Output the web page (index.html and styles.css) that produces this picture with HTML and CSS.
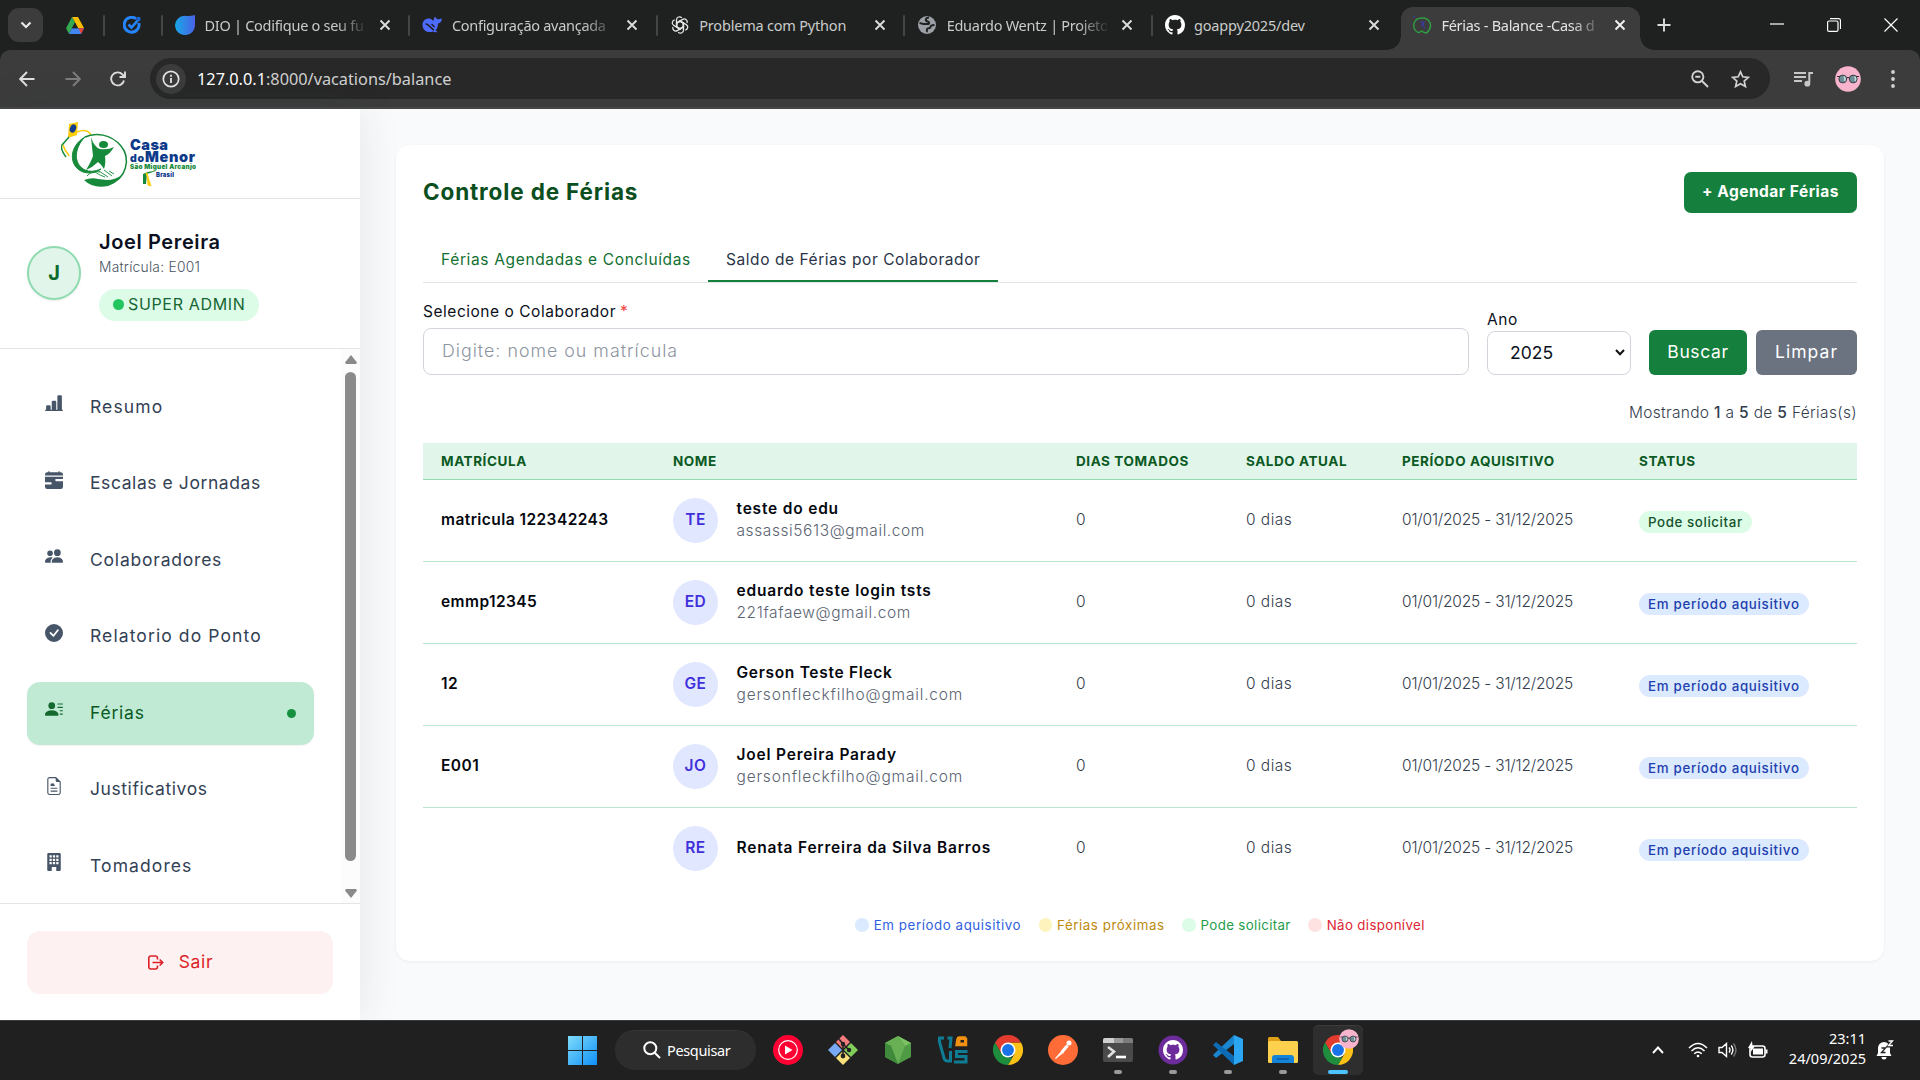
FILE: index.html
```html
<!DOCTYPE html>
<html lang="pt-BR">
<head>
<meta charset="utf-8">
<title>Férias - Balance - Casa do Menor</title>
<link rel="stylesheet" href="styles.css">
</head>
<body>
<svg class="defs" width="0" height="0">
  <defs>
    <symbol id="i-x" viewBox="0 0 12 12"><path d="M1.5 1.5l9 9M10.500 1.500l-9 9" fill="none" stroke="currentColor" stroke-width="1.9"/></symbol>
    <symbol id="i-github" viewBox="0 0 16 16"><path fill="currentColor" d="M8 0C3.580 0 0 3.580 0 8c0 3.540 2.290 6.530 5.470 7.590.4.070.55-.17.55-.38 0-.19-.01-.82-.01-1.490-2.010.37-2.530-.49-2.690-.94-.09-.23-.48-.94-.82-1.130-.28-.15-.68-.52-.01-.53.63-.01 1.080.58 1.230.82.72 1.210 1.870.87 2.330.66.07-.52.28-.87.51-1.070-1.780-.2-3.640-.89-3.640-3.950 0-.87.31-1.590.82-2.150-.08-.2-.36-1.020.08-2.120 0 0 .67-.21 2.200.82.64-.18 1.320-.27 2-.27s1.360.09 2 .27c1.530-1.040 2.200-.82 2.200-.82.44 1.100.16 1.920.08 2.120.51.56.82 1.270.82 2.150 0 3.070-1.870 3.750-3.650 3.950.29.25.54.73.54 1.480 0 1.070-.01 1.930-.01 2.200 0 .21.15.46.55.38A8.010 8.010 0 0 0 16 8c0-4.420-3.580-8-8-8"/></symbol>
    <symbol id="i-chrome" viewBox="0 0 48 48">
      <path d="M24 12H44.800A24 24 0 0 1 24 48L34.400 30z" fill="#fbc116"/>
      <path d="M13.600 30L3.200 12A24 24 0 0 1 44.800 12H24z" fill="#e33b2e"/>
      <path d="M3.200 12L13.600 30 24 36h7L24 48A24 24 0 0 1 3.200 12z" fill="#1e8e3e"/>
      <circle cx="24" cy="24" r="12" fill="#fff"/><circle cx="24" cy="24" r="9.500" fill="#1a73e8"/>
    </symbol>
    <symbol id="i-avatar" viewBox="0 0 26 26">
      <circle cx="13" cy="13" r="12.800" fill="#f8b4cc"/>
      <circle cx="7.800" cy="13" r="3.900" fill="#6f8d94" stroke="#3b3f46" stroke-width="1"/><circle cx="18.200" cy="13" r="3.900" fill="#6f8d94" stroke="#3b3f46" stroke-width="1"/>
      <path d="M2 10.500h3M21 10.500h3M11.600 12q1.400-1 2.800 0" stroke="#2b2f36" stroke-width="1"/><path d="M9 10.500q2 2 .5 4.500M19.500 10.500q2 2 .5 4.500" stroke="#c4dbe0" stroke-width="1.500" fill="none"/>
    </symbol>
  </defs>
</svg>

<header class="browser">
  <div class="tabstrip">
    <div class="tab-search"><svg width="12" height="8" viewBox="0 0 12 8"><path d="M1.500 1.500L6 6l4.500-4.500" fill="none" stroke="#e8e8e8" stroke-width="2.200"/></svg></div>
    <div class="pinned"><svg width="18" height="17" viewBox="0 0 18 17"><path d="M6 0h6l6 11h-6z" fill="#fbbc04"/><path d="M6 0l3 5.500L3 17 0 11.300z" fill="#34a853"/><path d="M3 17l3-5.700h12L15 17z" fill="#4285f4"/><path d="M12.500 11.300H18L15 17z" fill="#ea4335"/><path d="M9 5.500l3 5.800H6z" fill="#202120"/></svg></div>
    <i class="sep"></i>
    <div class="pinned pinned-b"><svg width="18" height="18" viewBox="0 0 18 18"><path d="M13 2.800A7.400 7.400 0 1 0 15.800 7" fill="none" stroke="#2684fc" stroke-width="3"/><path d="M5.500 8.500l3 3 7-8" fill="none" stroke="#2684fc" stroke-width="2.600"/><circle cx="15.500" cy="3" r="2.200" fill="#1a66d0"/></svg></div>
    <i class="sep"></i>
    <div class="tab">
      <svg width="20" height="20" viewBox="0 0 20 20"><defs><linearGradient id="dio" x1="0" x2="1"><stop offset="0" stop-color="#17a8e8"/><stop offset="1" stop-color="#4b62e6"/></linearGradient></defs><path d="M20 0v10a10 9.700 0 1 1-11-9.300Q15 1.500 20 0z" fill="url(#dio)"/></svg>
      <span class="tab-title fade">DIO | Codifique o seu fu</span><svg class="x"><use href="#i-x"/></svg>
    </div><i class="sep"></i>
    <div class="tab">
      <svg width="20" height="18" viewBox="0 0 20 18"><path d="M.5 9C.5 4 5 1.500 9 3l2.500 2c.5-1.500.5-3.500 1.500-4.500.8 2 2.500 3 4 2.800L20 2.500c-.5 3.500-2 4.500-4 5 0 3.500-1 5.500-2.500 6.800l2 1.700c-2 .5-3.500.2-4.500-.5C5 17.500.5 14 .5 9z" fill="#4d6bfe"/><path d="M3.500 8c3-1 5 4.500 8.500 6M9.500 8l3 3" stroke="#202120" stroke-width="1.500" fill="none"/></svg>
      <span class="tab-title fade">Configuração avançada</span><svg class="x"><use href="#i-x"/></svg>
    </div><i class="sep"></i>
    <div class="tab">
      <svg width="18" height="18" viewBox="0 0 18 18" fill="none" stroke="#e6e6e6" stroke-width="1.300"><g id="petal"><path d="M9 5.200L5.500 7.200V3.800a3 3 0 0 1 5.300-1.900"/><path d="M9 5.200l3.500 2v4"/></g><use href="#petal" transform="rotate(60 9 9)"/><use href="#petal" transform="rotate(120 9 9)"/><use href="#petal" transform="rotate(180 9 9)"/><use href="#petal" transform="rotate(240 9 9)"/><use href="#petal" transform="rotate(300 9 9)"/></svg>
      <span class="tab-title">Problema com Python</span><svg class="x"><use href="#i-x"/></svg>
    </div><i class="sep"></i>
    <div class="tab">
      <svg width="18" height="18" viewBox="0 0 18 18"><circle cx="9" cy="9" r="9" fill="#9aa0a6"/><path d="M11 1.500c-3.500 0-4 3-2 3.800s3 1.200 1.500 2.700H5.500C3.500 8 3 7 1.500 7M16.500 9c-2 0-4 0-4 2s-3 .5-3.500 2 .5 2-.5 3" stroke="#202120" stroke-width="2" fill="none"/></svg>
      <span class="tab-title fade">Eduardo Wentz | Projeto</span><svg class="x"><use href="#i-x"/></svg>
    </div><i class="sep"></i>
    <div class="tab">
      <svg class="gh" width="20" height="20"><use href="#i-github"/></svg>
      <span class="tab-title">goappy2025/dev</span><svg class="x"><use href="#i-x"/></svg>
    </div>
    <div class="tab active">
      <svg width="20" height="20" viewBox="0 0 20 20" fill="none"><path d="M6 17.500C-1 13 1 3 10 3s11 9 5 14.500M5 17c3 2 4-2 5-1s2 3 6 1" stroke="#2f9e44" stroke-width="1.400"/><path d="M1 1l2 1M8 6l3 2-2 3M12 6l-1 5 2 2" stroke="#3b3b9d" stroke-width="1.200"/></svg>
      <span class="tab-title fade">Férias - Balance -Casa d</span><svg class="x"><use href="#i-x"/></svg>
    </div>
    <svg class="plus" width="14" height="14" viewBox="0 0 14 14"><path d="M7 0.500v13M.5 7h13" stroke="#dcdcdc" stroke-width="1.900"/></svg>
    <div class="winctl">
      <svg width="14" height="14" viewBox="0 0 14 14"><path d="M0 6h14" stroke="#fff" stroke-width="1.200"/></svg>
      <svg width="14" height="14" viewBox="0 0 14 14" fill="none" stroke="#fff" stroke-width="1.200"><rect x=".6" y="3" width="10.400" height="10.400" rx="1.500"/><path d="M3 .700h8.500a2 2 0 0 1 2 2V11"/></svg>
      <svg width="14" height="14" viewBox="0 0 14 14"><path d="M.5.500l13 13M13.500.500l-13 13" stroke="#fff" stroke-width="1.200"/></svg>
    </div>
  </div>
  <div class="toolbar">
    <svg width="16" height="16" viewBox="0 0 16 16"><path d="M15.500 8H1.500M8 1L1.200 8 8 15" fill="none" stroke="#dedede" stroke-width="1.900"/></svg>
    <svg width="16" height="16" viewBox="0 0 16 16"><path d="M.5 8h14M8 1l6.800 7L8 15" fill="none" stroke="#7d7d7d" stroke-width="1.900"/></svg>
    <svg width="16" height="16" viewBox="0 0 16 16"><path d="M14 9.500A6.500 6.500 0 1 1 12.500 3.500L15 6M15 .5V6H9.500" fill="none" stroke="#dedede" stroke-width="1.900"/></svg>
    <div class="address">
      <span class="info"><svg width="18" height="18" viewBox="0 0 18 18"><circle cx="9" cy="9" r="7.700" fill="none" stroke="#e4e4e4" stroke-width="1.700"/><path d="M9 8v5M9 4.800v1.900" stroke="#e4e4e4" stroke-width="1.800"/></svg></span>
      <span class="url"><b>127.0.0.1</b>:8000/vacations/balance</span>
      <svg width="18" height="18" viewBox="0 0 18 18" fill="none" stroke="#d2d2d2" stroke-width="1.900"><circle cx="6.800" cy="6.800" r="5.600"/><path d="M11 11l6 6M4.300 6.800h5"/></svg>
      <svg class="star" width="19" height="18" viewBox="0 0 19 18"><path d="M9.500 1.800l2.300 5 5.500.6-4.100 3.700 1.200 5.400-4.900-2.800-4.900 2.800 1.200-5.400L1.700 7.400l5.500-.6z" fill="none" stroke="#d2d2d2" stroke-width="1.700"/></svg>
    </div>
    <svg class="music" width="20" height="16" viewBox="0 0 20 16"><path d="M0 2h12M0 6h12M0 10h8" stroke="#c7c7c7" stroke-width="1.900"/><path d="M15.300 12.500V2H19" stroke="#c7c7c7" stroke-width="2" fill="none"/><circle cx="13.300" cy="12.700" r="2.900" fill="#c7c7c7"/></svg>
    <svg class="me" width="26" height="26"><use href="#i-avatar"/></svg>
    <svg width="4" height="18" viewBox="0 0 4 18" fill="#d2d2d2"><circle cx="2" cy="2" r="1.900"/><circle cx="2" cy="9" r="1.900"/><circle cx="2" cy="16" r="1.900"/></svg>
  </div>
</header>

<div class="page">
  <aside class="sidebar">
    <div class="brand">
      <svg width="138" height="68" viewBox="0 0 138 68">
        <path d="M8 2l9-2-1 13-9 3z" fill="#fccc0a"/><ellipse cx="12" cy="6.500" rx="3" ry="4.300" fill="#123c8c" transform="rotate(20 12 6.500)"/>
        <path d="M8 15Q2 22 1 23q-2 4 4 12" fill="none" stroke="#168a3a" stroke-width="1.500"/><path d="M2 23q2 6 5 9l1 2M16 10q10-4 14 3" fill="none" stroke="#fccc0a" stroke-width="1.600"/>
        <path d="M24 15C34 10 50 12 60 24s6 34-13 38" fill="none" stroke="#168a3a" stroke-width="1.500"/>
        <path d="M24 15C8 24 7 44 22 50q10 3 18-3-9 4-16 1C12 42 13 26 24 15z" fill="#168a3a" stroke="#168a3a" stroke-width="1"/>
        <ellipse cx="42.500" cy="22.500" rx="4.500" ry="3.500" fill="#168a3a"/>
        <path d="M30 15q3 10 9 12 9 1 14-2-4 7-9 9 1 8-1 13-3-5-6-7-5 5-12 8 5-8 7-14-1-9-2-19z" fill="#168a3a"/>
        <path d="M23 58q8-3 14-1l9 1q8 0 15-5-5 8-14 11-15 3-24-6z" fill="#168a3a"/>
        <path d="M34 50q6 4 10 5M38 49l9 6M43 48l8 6M48 49l5 3M26 54q5-6 13-4" fill="none" stroke="#168a3a" stroke-width=".9"/>
        <text class="lg lg-a" x="69" y="28" textLength="38">Casa</text>
        <text class="lg lg-b" x="69" y="40" textLength="14">do</text><text class="lg lg-c" x="84" y="40" textLength="50">Menor</text>
        <text class="lg lg-d" x="69" y="47" textLength="66">São Miguel Arcanjo</text>
        <text class="lg lg-e" x="95" y="55" textLength="18">Brasil</text>
        <path d="M82 62V52q5-3 13-3l-9 3-1 10z" fill="#168a3a"/><path d="M86 51q2 8 4 13l-3-1q0-8-2-12z" fill="#fccc0a" stroke="#fccc0a"/>
      </svg>
    </div>
    <div class="profile">
      <div class="initial">J</div>
      <div>
        <div class="pname">Joel Pereira</div>
        <div class="pmat">Matrícula: E001</div>
        <div class="role"><i></i><span>SUPER ADMIN</span></div>
      </div>
    </div>
    <div class="navwrap">
      <nav class="nav">
        <a class="item"><svg viewBox="0 0 16 16"><path d="M11 2a1 1 0 0 1 1-1h2a1 1 0 0 1 1 1v12h.5a.5.5 0 0 1 0 1H.5a.5.5 0 0 1 0-1H1v-3a1 1 0 0 1 1-1h2a1 1 0 0 1 1 1v3h1V7a1 1 0 0 1 1-1h2a1 1 0 0 1 1 1v7h1z"/></svg><span class="wide">Resumo</span></a>
        <a class="item"><svg viewBox="0 0 16 16"><path d="M4 .5a.5.5 0 0 0-1 0V1H2a2 2 0 0 0-2 2v1h16V3a2 2 0 0 0-2-2h-1V.5a.5.5 0 0 0-1 0V1H4zM16 7V5H0v5h5a1 1 0 1 1 0 2H0v2a2 2 0 0 0 2 2h12a2 2 0 0 0 2-2V9h-6a1 1 0 1 1 0-2z"/></svg><span class="tight">Escalas e Jornadas</span></a>
        <a class="item"><svg viewBox="0 0 16 16"><path d="M7 14s-1 0-1-1 1-4 5-4 5 3 5 4-1 1-1 1zm4-6a3 3 0 1 0 0-6 3 3 0 0 0 0 6m-5.784 6A2.240 2.240 0 0 1 5 13c0-1.355.68-2.750 1.936-3.720A6.300 6.300 0 0 0 5 9c-4 0-5 3-5 4s1 1 1 1zM4.500 8a2.500 2.500 0 1 0 0-5 2.500 2.500 0 0 0 0 5"/></svg><span>Colaboradores</span></a>
        <a class="item"><svg viewBox="0 0 16 16"><path d="M16 8A8 8 0 1 1 0 8a8 8 0 0 1 16 0m-3.970-3.030a.75.75 0 0 0-1.080.022L7.477 9.417 5.384 7.323a.75.75 0 0 0-1.060 1.060L6.970 11.030a.75.75 0 0 0 1.079-.02l3.992-4.990a.75.75 0 0 0-.01-1.050z"/></svg><span class="wide">Relatorio do Ponto</span></a>
        <a class="item current"><svg viewBox="0 0 16 16"><path d="M6 8a3 3 0 1 0 0-6 3 3 0 0 0 0 6m-5 6s-1 0-1-1 1-4 6-4 6 3 6 4-1 1-1 1zM11 3.500a.5.5 0 0 1 .5-.5h4a.5.5 0 0 1 0 1h-4a.5.5 0 0 1-.5-.5m.5 2.500a.5.5 0 0 0 0 1h4a.5.5 0 0 0 0-1zm2 3a.5.5 0 0 0 0 1h2a.5.5 0 0 0 0-1zm0 3a.5.5 0 0 0 0 1h2a.5.5 0 0 0 0-1z"/></svg><span>Férias</span><i></i></a>
        <a class="item"><svg viewBox="0 0 16 16"><path d="M9.500.5H4a1.500 1.500 0 0 0-1.500 1.500v12A1.500 1.500 0 0 0 4 15.500h8a1.500 1.500 0 0 0 1.500-1.500V4.500z" fill="none" stroke="currentColor"/><path d="M9.500 0v3A1.500 1.500 0 0 0 11 4.500h3zM5 6l2.500-.5L9 8H5zM5 9.500h6v1H5zM5 12h6v1H5z"/></svg><span class="tight">Justificativos</span></a>
        <a class="item"><svg viewBox="0 0 16 16"><path fill-rule="evenodd" d="M3 0a1 1 0 0 0-1 1v14a1 1 0 0 0 1 1h3v-3.500h4V16h3a1 1 0 0 0 1-1V1a1 1 0 0 0-1-1zm1 2h2v2H4zm3 0h2v2H7zm3 0h2v2h-2zM4 5h2v2H4zm3 0h2v2H7zm3 0h2v2h-2zM4 8h2v2H4zm3 0h2v2H7zm3 0h2v2h-2z"/></svg><span class="wide">Tomadores</span></a>
      </nav>
      <div class="scroll"><svg width="12" height="9" viewBox="0 0 12 9"><path d="M6 0l6 7.500L11 9H1L0 7.500z"/></svg><i></i><svg width="12" height="9" viewBox="0 0 12 9"><path d="M6 9L0 1.500 1 0h10l1 1.500z"/></svg></div>
    </div>
    <div class="side-foot">
      <a class="logout"><svg width="16" height="15" viewBox="0 0 16 15" fill="none" stroke="currentColor" stroke-width="1.600"><path d="M9.500 4.500V3A2.200 2.200 0 0 0 7.300 1H3A2.200 2.200 0 0 0 .8 3v9A2.200 2.200 0 0 0 3 14h4.300a2.200 2.200 0 0 0 2.200-2v-1.500M4.500 7.500h10M11.700 4.500l3 3-3 3"/></svg><span>Sair</span></a>
    </div>
  </aside>

  <main class="main">
    <section class="card">
      <div class="head"><h1>Controle de Férias</h1><a class="btn-add">+ Agendar Férias</a></div>
      <div class="tabs"><a>Férias Agendadas e Concluídas</a><a class="selected">Saldo de Férias por Colaborador</a></div>
      <div class="filters">
        <div class="f-name"><label>Selecione o Colaborador <em>*</em></label><div class="input">Digite: nome ou matrícula</div></div>
        <div class="f-year"><label>Ano</label><div class="select"><span>2025</span><svg width="10" height="7" viewBox="0 0 10 7"><path d="M1 1l4 4.300L9 1" fill="none" stroke="#111" stroke-width="2"/></svg></div></div>
        <div class="f-btns"><a class="b1">Buscar</a><a class="b2">Limpar</a></div>
      </div>
      <p class="count">Mostrando <b>1</b> a <b>5</b> de <b>5</b> Férias(s)</p>
      <div class="table">
        <div class="row thead"><span>MATRÍCULA</span><span>NOME</span><span>DIAS TOMADOS</span><span>SALDO ATUAL</span><span>PERÍODO AQUISITIVO</span><span>STATUS</span></div>
        <div class="row"><strong class="code">matricula 122342243</strong><div class="who"><i>TE</i><div><strong>teste do edu</strong><small>assassi5613@gmail.com</small></div></div><span>0</span><span>0 dias</span><span class="dates">01/01/2025 - 31/12/2025</span><span><mark class="ok">Pode solicitar</mark></span></div>
        <div class="row"><strong class="code">emmp12345</strong><div class="who"><i>ED</i><div><strong>eduardo teste login tsts</strong><small>221fafaew@gmail.com</small></div></div><span>0</span><span>0 dias</span><span class="dates">01/01/2025 - 31/12/2025</span><span><mark>Em período aquisitivo</mark></span></div>
        <div class="row"><strong class="code">12</strong><div class="who"><i>GE</i><div><strong class="tight">Gerson Teste Fleck</strong><small class="wide">gersonfleckfilho@gmail.com</small></div></div><span>0</span><span>0 dias</span><span class="dates">01/01/2025 - 31/12/2025</span><span><mark>Em período aquisitivo</mark></span></div>
        <div class="row"><strong class="code">E001</strong><div class="who"><i>JO</i><div><strong>Joel Pereira Parady</strong><small class="wide">gersonfleckfilho@gmail.com</small></div></div><span>0</span><span>0 dias</span><span class="dates">01/01/2025 - 31/12/2025</span><span><mark>Em período aquisitivo</mark></span></div>
        <div class="row"><strong class="code"></strong><div class="who"><i>RE</i><div><strong>Renata Ferreira da Silva Barros</strong></div></div><span>0</span><span>0 dias</span><span class="dates">01/01/2025 - 31/12/2025</span><span><mark>Em período aquisitivo</mark></span></div>
      </div>
      <div class="legend">
        <span class="blue"><i></i>Em período aquisitivo</span><span class="amber"><i></i>Férias próximas</span><span class="green"><i></i>Pode solicitar</span><span class="red"><i></i>Não disponível</span>
      </div>
    </section>
  </main>
</div>

<footer class="taskbar">
  <svg class="win" width="29" height="29" viewBox="0 0 29 29"><defs><linearGradient id="wg" x1="0" y1="0" x2="1" y2="1" gradientUnits="objectBoundingBox"><stop offset="0" stop-color="#7fdcfc"/><stop offset="1" stop-color="#0f8ff5"/></linearGradient></defs><path d="M0 0h14v14H0zM15 0h14v14H15zM0 15h14v14H0zM15 15h14v14H15z" fill="url(#wg)"/></svg>
  <div class="search"><svg width="18" height="18" viewBox="0 0 18 18" fill="none" stroke="#fff" stroke-width="2"><circle cx="7.300" cy="7.300" r="6"/><path d="M11.700 11.700l5.300 5.300"/></svg><span>Pesquisar</span></div>
  <div class="apps">
    <div class="app"><svg viewBox="0 0 30 30"><circle cx="15" cy="15" r="15" fill="#ff0033"/><circle cx="15" cy="15" r="9.300" fill="none" stroke="#fff" stroke-width="1.200"/><path d="M12 10.500v9l7.500-4.500z" fill="#fff"/></svg></div>
    <div class="app"><svg viewBox="0 0 30 30"><path d="M15 0l7 7-7 7-7-7z" fill="#f57c7c"/><path d="M23 8l7 7-7 7-7-7z" fill="#83cd5b"/><path d="M7 8l7 7-7 7-7-7z" fill="#7aaaf5"/><path d="M15 16l7 7-7 7-7-7z" fill="#f8e07a"/><path d="M11 4l4 5v14M15 9l6 6" stroke="#222" stroke-width="1.600" fill="none"/><circle cx="15" cy="9" r="2.200" fill="#222"/><circle cx="15" cy="21" r="2.400" fill="#222"/><circle cx="21" cy="15" r="2.200" fill="#222"/></svg></div>
    <div class="app"><svg viewBox="0 0 30 30"><path d="M15 1l13 7v14l-13 7-13-7V8z" fill="#4f9a44"/><path d="M15 1l13 7-6 3z" fill="#7cc264"/><path d="M15 1L2 8l6 3zM8 11L15 1l7 10-7 18z" fill="#69b054"/><path d="M2 8l6 3 7 18-13-7z" fill="#3f8a3b"/></svg></div>
    <div class="app"><svg viewBox="0 0 30 30" fill="none" stroke-width="3"><path d="M6 3H1.500v4L6 23q.8 3 3.500 3h3V16M9.500 3H13l-1 10" stroke="#0e7c94"/><path d="M29.500 16.500h-11v5H28V27H16" stroke="#0e7c94"/><path d="M18 10.500l1-6.500q.3-2 2-2h6l1.500 1.500v7z" fill="#f29111" stroke="#f29111" stroke-width="1.500"/><path d="M22.500 5h3.500v2.500h-3.500z" fill="#222"/></svg></div>
    <div class="app"><svg><use href="#i-chrome"/></svg></div>
    <div class="app"><svg viewBox="0 0 30 30"><circle cx="15" cy="15" r="15" fill="#ff6c37"/><path d="M7.500 23.500l6-8 2.500 2.500z" fill="#ffd9c9"/><path d="M14 17l5.500-6.500" stroke="#fff" stroke-width="3.200"/><circle cx="21" cy="8" r="2.500" fill="#fff"/><path d="M7.500 23.500L15 16" stroke="#fff" stroke-width="1.300"/></svg></div>
    <div class="app run"><svg viewBox="0 0 30 30"><rect x="0" y="3" width="30" height="24" rx="2" fill="#4a4a4a"/><path d="M2 3h9v5H0V5a2 2 0 0 1 2-2z" fill="#d0d0d0"/><path d="M11 3h9v5h-9z" fill="#9a9a9a"/><path d="M20 3h8a2 2 0 0 1 2 2v3H20z" fill="#7c7c7c"/><path d="M5 12l6 4.500L5 22" fill="none" stroke="#e0e0e0" stroke-width="2.600"/><path d="M13 22h10" stroke="#fff" stroke-width="2.600"/></svg></div>
    <div class="app run"><svg viewBox="0 0 30 30"><circle cx="15" cy="15" r="14.500" fill="#6d2c9c"/><svg class="octo" x="5" y="5" width="20" height="20"><use href="#i-github"/></svg></svg></div>
    <div class="app run"><svg viewBox="0 0 30 30"><path d="M21 0l9 4v22l-9 4z" fill="#2aa6f2"/><path d="M21 0L2 18l-2 2 3 3 18-14z" fill="#1b86cf"/><path d="M21 30L0 10l3-3 18 14z" fill="#0b6cb5"/></svg></div>
    <div class="app run"><svg viewBox="0 0 30 30"><path d="M1 2h9l3 4h16v8H0V3z" fill="#dfa015"/><rect x="0" y="6" width="30" height="22" rx="1.500" fill="#fdd04e"/><path d="M4 28v-5q0-3 3-3h16q3 0 3 3v5z" fill="#1484d8"/><path d="M9 24h12" stroke="#0b5da8" stroke-width="1.500"/></svg></div>
    <div class="app on"><svg viewBox="0 0 48 48"><use href="#i-chrome"/></svg><svg class="badge"><use href="#i-avatar"/></svg></div>
  </div>
  <div class="tray">
    <svg class="caret" width="12" height="8" viewBox="0 0 12 8"><path d="M1 7l5-5.500L11 7" fill="none" stroke="#fff" stroke-width="1.900"/></svg>
    <svg width="20" height="16" viewBox="0 0 20 16" fill="none" stroke="#fff" stroke-width="1.500"><path d="M1 6q9-9 18 0M3.500 9q6.500-6.500 13 0M6.200 11.800q3.800-3.600 7.600 0"/><circle cx="10" cy="14" r="1.300" fill="#fff" stroke="none"/></svg>
    <svg width="20" height="16" viewBox="0 0 20 16" fill="none" stroke="#fff" stroke-width="1.400"><path d="M1 5.500h3L8.500 1.500v13L4 10.500H1zM11 5.500q2 2.500 0 5"/><path d="M13.200 3.500q3.500 4.500 0 9"/><path d="M15.500 1.500q5 6.500 0 13" stroke="#777"/></svg>
    <svg width="20" height="18" viewBox="0 0 20 18"><rect x="2" y="5" width="15" height="11" rx="2.500" fill="none" stroke="#fff" stroke-width="1.600"/><rect x="5" y="7.500" width="10" height="6" fill="#fff"/><path d="M18.500 8.500v4" stroke="#fff" stroke-width="2"/><path d="M4 0L0 7h3l-1 5 5-7H4.500z" fill="#fff"/></svg>
    <div class="clock"><span>23:11</span><span>24/09/2025</span></div>
    <svg class="bell" width="18" height="20" viewBox="0 0 18 20"><path d="M8 2a6 6 0 0 0-6 6v5L.500 16h15L14 13V8a6 6 0 0 0-6-6zM5.500 17h5a2.500 2.500 0 0 1-5 0z" fill="#fff"/><path d="M12.500 1H17l-4.500 5H17" fill="none" stroke="#222" stroke-width="3"/><path d="M12.500 1H16.500l-4 4.500h4.500" fill="none" stroke="#fff" stroke-width="1.300"/><path d="M5.500 8h4l-4 4.500h4" fill="none" stroke="#222" stroke-width="1.300"/></svg>
  </div>
</footer>
</body>
</html>
```
FILE: styles.css
```css
* { box-sizing: border-box; }
html, body { margin: 0; height: 100%; }
body { width: 1920px; height: 1080px; overflow: hidden; display: flex; flex-direction: column; font-family: "Inter", "Open Sans", sans-serif; background: #f9fafb; color: #0b1020; }
svg { flex: none; display: block; }
.defs { position: absolute; }
i, em { font-style: normal; }

/* browser window */
.browser { height: 109px; flex: none; background: #1f2120; font-family: "Noto Sans", sans-serif; }
.tabstrip { height: 50px; display: flex; align-items: center; padding-left: 8px; }
.tab-search { width: 35px; height: 34px; border-radius: 11px; background: #3c3c3c; display: grid; place-items: center; }
.pinned { width: 60px; padding-left: 23px; }
.pinned-b { width: 56px; padding-left: 18px; }
.sep { flex: none; width: 2px; height: 21px; border-radius: 1px; background: #444645; }
.tab { width: 245.400px; height: 43px; display: flex; align-items: center; padding-left: 12px; color: #c9cbca; }
.tab > svg:first-child { width: 20px; }
.tab-title { flex: 1; margin-left: 9.500px; font-size: 14.500px; white-space: nowrap; overflow: hidden; line-height: 24px; letter-spacing: -.2px; }
.fade { letter-spacing: -.28px; -webkit-mask: linear-gradient(90deg, #000 82%, transparent 102%); mask: linear-gradient(90deg, #000 82%, transparent 102%); }
.x { width: 12px; height: 12px; margin: 0 17.500px 0 14px; color: #dcdcdc; }
.gh { color: #fff; }
.tab.active { position: relative; margin-left: 3px; width: 239px; align-self: flex-end; background: #3c3c3c; border-radius: 12px 12px 0 0; color: #e3e3e3; padding: 0 0 7px 11px; }
.tab.active::before, .tab.active::after { content: ""; position: absolute; bottom: 0; width: 14px; height: 14px; }
.tab.active::before { left: -14px; background: radial-gradient(circle at 0 0, transparent 13.500px, #3c3c3c 14px); }
.tab.active::after { right: -14px; background: radial-gradient(circle at 100% 0, transparent 13.500px, #3c3c3c 14px); }
.tab.active .x { margin-right: 14px; color: #f2f2f2; }
.plus { margin-left: 17px; }
.winctl { margin-left: auto; display: flex; gap: 43px; padding-right: 22px; }
.toolbar { height: 59px; background: #3c3c3c; border-radius: 10px 10px 0 0; border-bottom: 2px solid #474747; display: flex; align-items: center; padding-left: 19px; }
.toolbar > svg + svg { margin-left: 29.500px; }
.address { width: 1620px; height: 41px; margin-left: 24px; border-radius: 21px; background: #282828; display: flex; align-items: center; padding: 0 20px 0 6px; }
.info { width: 30px; height: 30px; border-radius: 50%; background: #3c3c3c; display: grid; place-items: center; margin-right: 11px; }
.url { flex: 1; font-size: 16.300px; line-height: 24px; color: #d0d0d0; }
.url b { font-weight: 400; color: #fff; }
.star { margin-left: 22px; }
.music { margin-left: 23.500px; }
.toolbar > svg.me { margin-left: 21px; }
.toolbar > svg.me + svg { margin-left: 30px; }

/* sidebar */
.page { flex: 1; display: flex; min-height: 0; }
.sidebar { width: 360px; flex: none; background: #fff; display: flex; flex-direction: column; box-shadow: 0 0 40px rgba(30, 50, 70, .1); }
.brand { height: 90px; border-bottom: 1px solid #e2e5e8; padding: 13px 0 0 61px; }
.lg { font-family: "Inter", sans-serif; font-weight: 900; fill: #0d3a8a; }
.lg-a { font-size: 14.500px; }
.lg-b { font-size: 10.500px; }
.lg-c { font-size: 14.500px; }
.lg-d { font-size: 6.300px; fill: #168a3a; }
.lg-e { font-size: 5.800px; }
.profile { height: 150px; border-bottom: 1px solid #e2e5e8; display: flex; align-items: flex-start; padding: 47px 0 0 27px; gap: 18px; }
.profile > div:last-child { margin-top: -16px; }
.initial { width: 54px; height: 54px; border-radius: 50%; border: 2px solid #8fdbb0; background: #e2f5ea; color: #0b6b2a; display: grid; place-items: center; font-weight: 700; font-size: 20px; box-shadow: 0 1px 2px rgba(0,0,0,.08); }
.pname { font-size: 20px; font-weight: 600; line-height: 25px; letter-spacing: .031em; }
.pmat { font-size: 13.800px; font-weight: 300; color: #4b5563; line-height: 20px; margin-top: 2px; letter-spacing: .017em; }
.role { width: 160px; height: 32px; margin-top: 12px; border-radius: 16px; background: #dcfce7; color: #166534; display: flex; align-items: center; gap: 4px; padding: 0 0 2px 14px; font-size: 16px; letter-spacing: .041em; }
.role i { width: 11px; height: 11px; margin-top: 1px; border-radius: 50%; background: #22c55e; }
.navwrap { flex: 1; min-height: 0; display: flex; overflow: hidden; }
.nav { width: 341px; padding: 27px 27px 0; display: flex; flex-direction: column; gap: 13.500px; }
.item { flex: none; height: 63px; border-radius: 13px; display: flex; align-items: center; padding: 0 18px 3px; color: #334155; font-size: 17.500px; letter-spacing: .045em; }
.item svg { width: 18px; height: 18px; fill: currentColor; color: #475569; margin: -6px 27px 0 0; }
.tight { letter-spacing: .033em; }
.wide { letter-spacing: .063em; }
.current { background: #c0ead4; color: #0b5a24; box-shadow: 0 1px 2px rgba(0,0,0,.06); }
.current svg { color: #15692f; }
.current i { margin: 3px 0 0 auto; width: 9px; height: 9px; border-radius: 50%; background: #15903f; }
.scroll { width: 19px; background: #fcfcfc; display: flex; flex-direction: column; align-items: center; padding: 6px 0 5px; fill: #8a8a8a; }
.scroll i { width: 11px; height: 489px; background: #8a8a8a; border-radius: 6px; margin: 8px 0 auto; }
.side-foot { height: 117px; border-top: 1px solid #e2e5e8; padding: 27px; }
.logout { height: 63px; border-radius: 13px; background: #fef1f1; color: #dc1f26; display: flex; align-items: center; justify-content: center; gap: 15px; font-size: 17.500px; padding: 0 0 2px 1px; letter-spacing: .04em; }
.logout svg { margin-top: 2px; }

/* content card */
.main { flex: 1; padding: 36px 36px 0; }
.card { height: 816px; width: 1488px; background: #fff; border-radius: 14px; padding: 27px; box-shadow: 0 1px 3px rgba(0,0,0,.06); }
.head { height: 41px; display: flex; justify-content: space-between; }
h1 { margin: 6px 0 0; font-size: 22.500px; line-height: 28px; font-weight: 700; color: #0b4f21; letter-spacing: .038em; }
.btn-add { width: 173px; height: 41px; border-radius: 7px; background: #15803d; color: #fff; font-weight: 700; font-size: 15.500px; display: grid; place-items: center; padding-bottom: 3px; letter-spacing: .032em; }
.tabs { height: 70px; border-bottom: 1px solid #e2e5e8; display: flex; align-items: flex-end; font-size: 15.500px; letter-spacing: .042em; }
.tabs a { height: 46px; width: 285px; padding: 14px 18px 0; color: #11702f; line-height: 20px; white-space: nowrap; }
.tabs .selected { width: 290px; color: #2a3446; border-bottom: 2px solid #15803d; letter-spacing: .036em; }
.filters { display: flex; margin-top: 11px; height: 81px; align-items: flex-end; }
label { display: block; font-size: 15.500px; line-height: 20px; letter-spacing: .034em; }
label em { color: #ef4444; margin-left: -1px; }
.input { width: 1046px; height: 47px; margin-top: 6px; border: 1px solid #d1d5db; border-radius: 8px; padding: 0 18px; line-height: 43px; font-size: 17.800px; font-weight: 300; color: #8d95a1; letter-spacing: .057em; }
.f-year { margin-left: 18px; }
.select { width: 144px; height: 44px; margin-top: 1px; border: 1px solid #d1d5db; border-radius: 8px; display: flex; align-items: center; justify-content: space-between; padding: 0 5px 1px 22px; font-size: 17.500px; }
.f-btns { display: flex; gap: 9px; margin-left: 18px; color: #fff; font-size: 17.500px; text-align: center; line-height: 43px; letter-spacing: .035em; }
.f-btns a { height: 45px; border-radius: 6px; }
.b1 { width: 98px; background: #15803d; }
.b2 { width: 101px; background: #6b7280; letter-spacing: .06em; }
.count { margin: 28px 0 20px; line-height: 20px; text-align: right; font-size: 15.500px; font-weight: 300; color: #333d4d; letter-spacing: .021em; }
.count b { font-weight: 500; }
.row { height: 82px; display: grid; grid-template-columns: 232px 403px 170px 156px 237px auto; align-items: center; padding: 0 0 1px 18px; border-bottom: 1px solid #b9e6cf; font-size: 15.500px; font-weight: 300; color: #333d4d; letter-spacing: .03em; }
.row:last-child { border: 0; }
.row > span { margin-top: -2px; }
.row strong { font-weight: 600; color: #05080f; display: block; line-height: 22px; letter-spacing: .052em; }
.row strong.tight { letter-spacing: .045em; }
.row strong.code { letter-spacing: .028em; }
.row small { font-size: 15.500px; color: #5b6472; display: block; line-height: 22px; letter-spacing: .038em; }
.row small.wide { letter-spacing: .053em; }
.row .dates { letter-spacing: -.012em; }
.row.thead { height: 37px; background: #e2f5ea; border-color: #93d8b3; font-size: 13.500px; font-weight: 700; color: #0b5a24; letter-spacing: .042em; }
.thead > span { margin-top: 1px; }
.who { display: flex; align-items: center; gap: 18.500px; }
.who > div { margin-top: -1px; }
.who i { width: 45px; height: 45px; border-radius: 50%; background: #e0e7ff; color: #4030dc; font-weight: 600; display: grid; place-items: center; padding-bottom: 2px; }
mark { display: inline-block; border-radius: 11px; height: 22px; line-height: 22px; padding: 0 9px; margin-top: 5px; font-size: 13.300px; font-weight: 500; background: #dbeafe; color: #1e3fae; white-space: nowrap; letter-spacing: .053em; }
.ok { background: #dcfce7; color: #14532d; letter-spacing: .045em; }
.legend { display: flex; justify-content: center; gap: 17.500px; margin-top: 25px; font-size: 13.300px; line-height: 20px; letter-spacing: .043em; }
.legend > span { display: flex; align-items: center; gap: 5px; }
.legend i { width: 13.500px; height: 13.500px; border-radius: 50%; }
.blue { color: #2f5fe0; } .blue i { background: #dbeafe; }
.amber { color: #c08a10; } .amber i { background: #fef3bd; }
.green { color: #1f9d4c; letter-spacing: .027em; } .green i { background: #dcfce7; }
.red { color: #dc2633; letter-spacing: .027em; } .red i { background: #fee2e2; }

/* taskbar */
.taskbar { height: 60px; flex: none; background: #202020; border-top: 1px solid #3a3d3e; display: flex; align-items: center; padding: 0 0 1px 568px; font-family: "Noto Sans", sans-serif; color: #fff; }
.search { width: 141px; height: 40px; margin-left: 18px; border-radius: 20px; background: #2d2d2d; border-top: 1px solid #383838; display: flex; align-items: center; gap: 6px; padding: 0 0 2px 28px; font-size: 14.500px; letter-spacing: -.35px; }
.apps { display: flex; margin-left: 7px; gap: 5px; }
.app { position: relative; width: 50px; height: 50px; border-radius: 6px; display: grid; place-items: center; }
.app > svg { width: 30px; height: 30px; }
.octo { color: #fff; }
.app.run::after, .app.on::after { content: ""; position: absolute; left: 21px; bottom: 1px; width: 8px; height: 4px; border-radius: 2px; background: #9a9a9a; }
.app.on { background: #2e2e2e; box-shadow: inset 0 1px #3c3c3c; }
.app.on::after { left: 15px; width: 20px; background: #4cc2ff; }
.app.on .badge { position: absolute; left: 26px; top: 4px; width: 20px; height: 20px; }
.tray { margin-left: auto; display: flex; align-items: center; gap: 10px; padding-right: 26px; }
.caret { margin-right: 14px; }
.clock { display: flex; flex-direction: column; align-items: flex-end; font-size: 14.500px; line-height: 20px; width: 88px; margin-top: -4px; }
```
